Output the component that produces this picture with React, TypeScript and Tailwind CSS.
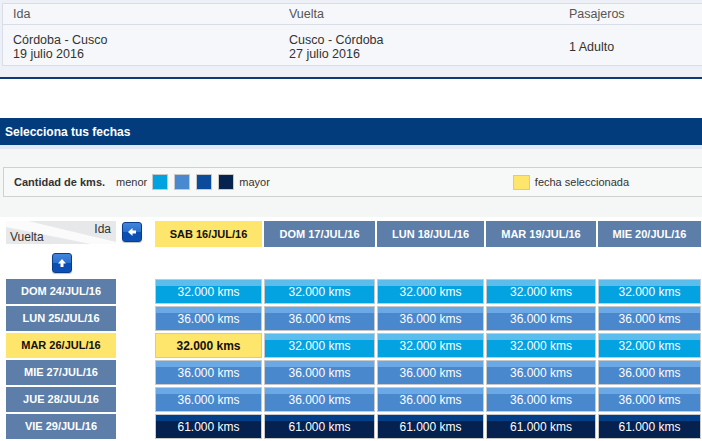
import React from "react";

const cols = [
  { label: "SAB 16/JUL/16", w: "w-[107px]", sel: true },
  { label: "DOM 17/JUL/16", w: "w-[111px]", sel: false },
  { label: "LUN 18/JUL/16", w: "w-[107px]", sel: false },
  { label: "MAR 19/JUL/16", w: "w-[110px]", sel: false },
  { label: "MIE 20/JUL/16", w: "w-[103px]", sel: false },
];

type Level = 1 | 2 | 4;
const rows: { label: string; level: Level; sel?: boolean }[] = [
  { label: "DOM 24/JUL/16", level: 1 },
  { label: "LUN 25/JUL/16", level: 2 },
  { label: "MAR 26/JUL/16", level: 1, sel: true },
  { label: "MIE 27/JUL/16", level: 2 },
  { label: "JUE 28/JUL/16", level: 2 },
  { label: "VIE 29/JUL/16", level: 4 },
];

const levelClass: Record<Level, string> = {
  1: "bg-[linear-gradient(#5cbcec_0_6px,#03a3e2_6px)]",
  2: "bg-[linear-gradient(#6aa9e6_0_6px,#4a88cd_6px)]",
  4: "bg-[linear-gradient(#023f89_0_6px,#05214f_6px)]",
};
const levelText: Record<Level, string> = {
  1: "32.000 kms",
  2: "36.000 kms",
  4: "61.000 kms",
};

function ArrowButton({ dir }: { dir: "left" | "up" }) {
  return (
    <div className="w-[20px] h-[20px] rounded-[3px] border border-[#0b3c8a] bg-[linear-gradient(#4285dc_0%,#2c70cf_48%,#0a4db3_52%,#0c50b6_100%)] flex items-center justify-center shadow-[0_1px_1px_rgba(0,0,0,0.25)]">
      <svg width="10" height="10" viewBox="0 0 10 10">
        {dir === "left" ? (
          <polygon points="1,5 5.5,1 5.5,3.5 9,3.5 9,6.5 5.5,6.5 5.5,9" fill="#fff" />
        ) : (
          <polygon points="5,1 9,5.5 6.5,5.5 6.5,9 3.5,9 3.5,5.5 1,5.5" fill="#fff" />
        )}
      </svg>
    </div>
  );
}

export default function App() {
  return (
    <div className="w-[702px] h-[441px] overflow-hidden bg-white font-['Liberation_Sans',Arial,sans-serif] text-[#333]">
      {/* Summary table */}
      <div className="h-[79px] bg-[#edf0f6] pt-[3px] pl-[2px] border-b-2 border-[#0b3a78]">
        <div className="border border-r-0 border-[#d8dde8] bg-[#f6f7fa] text-[12.5px]">
          <div className="flex h-[21px] items-center pt-[1px] border-b border-[#d8dde8] text-[#555]">
            <div className="w-[276px] pl-[10px]">Ida</div>
            <div className="w-[280px] pl-[10px]">Vuelta</div>
            <div className="pl-[10px]">Pasajeros</div>
          </div>
          <div className="flex h-[40px] items-center pt-[3px] leading-[14px]">
            <div className="w-[276px] pl-[10px]">
              <div>Córdoba - Cusco</div>
              <div>19 julio 2016</div>
            </div>
            <div className="w-[280px] pl-[10px]">
              <div>Cusco - Córdoba</div>
              <div>27 julio 2016</div>
            </div>
            <div className="pl-[10px]">1 Adulto</div>
          </div>
        </div>
      </div>

      <div className="h-[39px]" />

      {/* Title bar */}
      <div className="h-[27px] bg-[#023c7d] flex items-center pl-[5px] text-white font-bold text-[12px]">
        Selecciona tus fechas
      </div>
      <div className="h-[4px] bg-[#e1e7f3]" />

      {/* Legend */}
      <div className="h-[68px] bg-[#f5f6f6] pt-[18px] pl-[3px]">
        <div className="h-[30px] border border-r-0 border-[#cfd0d0] bg-[#f7f8f8] flex items-center text-[11px] text-[#333]">
          <span className="ml-[10px] font-bold">Cantidad de kms.</span>
          <span className="ml-[11px]">menor</span>
          <span className="ml-[5px] w-[16px] h-[16px] border border-[#c8c8c8] bg-[#00a3e0]" />
          <span className="ml-[6px] w-[16px] h-[16px] border border-[#c8c8c8] bg-[#4a89cf]" />
          <span className="ml-[6px] w-[16px] h-[16px] border border-[#c8c8c8] bg-[#0a4b9b]" />
          <span className="ml-[6px] w-[16px] h-[16px] border border-[#c8c8c8] bg-[#062350]" />
          <span className="ml-[5px]">mayor</span>
          <span className="ml-[243px] w-[17px] h-[15px] border border-[#c8c8c8] bg-[#fee66c]" />
          <span className="ml-[5px]">fecha seleccionada</span>
        </div>
      </div>

      {/* Grid */}
      <div className="pl-[6px] pt-[4px] flex flex-col gap-[2px]">
        {/* header row */}
        <div className="flex h-[25px]">
          <div className="relative w-[110px] h-[23px] bg-[#e7e8ea] text-[12px] text-[#333]">
            <svg className="absolute inset-0" width="110" height="23" viewBox="0 0 110 23">
              <polygon points="0,0 22,0 110,21 110,23 85,23 0,6" fill="#fbfbfb" />
            </svg>
            <span className="absolute right-[5px] top-[1px] leading-[14px]">Ida</span>
            <span className="absolute left-[4px] bottom-[0px] leading-[14px]">Vuelta</span>
          </div>
          <div className="w-[35px] ml-[2px] pl-[4px] pt-[1px]">
            <ArrowButton dir="left" />
          </div>
          <div className="flex gap-[2px] ml-[2px]">
            {cols.map((c) => (
              <div
                key={c.label}
                className={`${c.w} h-[26px] flex items-center justify-center text-[11px] font-bold ${
                  c.sel ? "bg-[#fee56c] text-[#111]" : "bg-[#5c7ea9] text-white"
                }`}
              >
                {c.label}
              </div>
            ))}
          </div>
        </div>
        {/* up arrow row */}
        <div className="flex h-[29px] items-center">
          <div className="w-[110px] flex justify-center pl-[1px]">
            <ArrowButton dir="up" />
          </div>
        </div>
        {/* data rows */}
        {rows.map((r) => (
          <div key={r.label} className="flex h-[25px]">
            <div
              className={`w-[110px] flex items-center justify-center text-[11px] font-bold ${
                r.sel ? "bg-[#fee56c] text-[#111]" : "bg-[#5c7ea9] text-white"
              }`}
            >
              {r.label}
            </div>
            <div className="w-[39px]" />
            <div className="flex gap-[2px]">
              {cols.map((c, i) => {
                const selCell = r.sel && i === 0;
                return (
                  <div
                    key={c.label}
                    className={`${c.w} h-[25px] border border-[#c9c9c9] flex items-center justify-center text-[12px] ${
                      selCell ? "bg-[#fee56c] text-[#111] font-bold" : `${levelClass[r.level]} text-white`
                    }`}
                  >
                    {levelText[r.level]}
                  </div>
                );
              })}
            </div>
          </div>
        ))}
      </div>
    </div>
  );
}
